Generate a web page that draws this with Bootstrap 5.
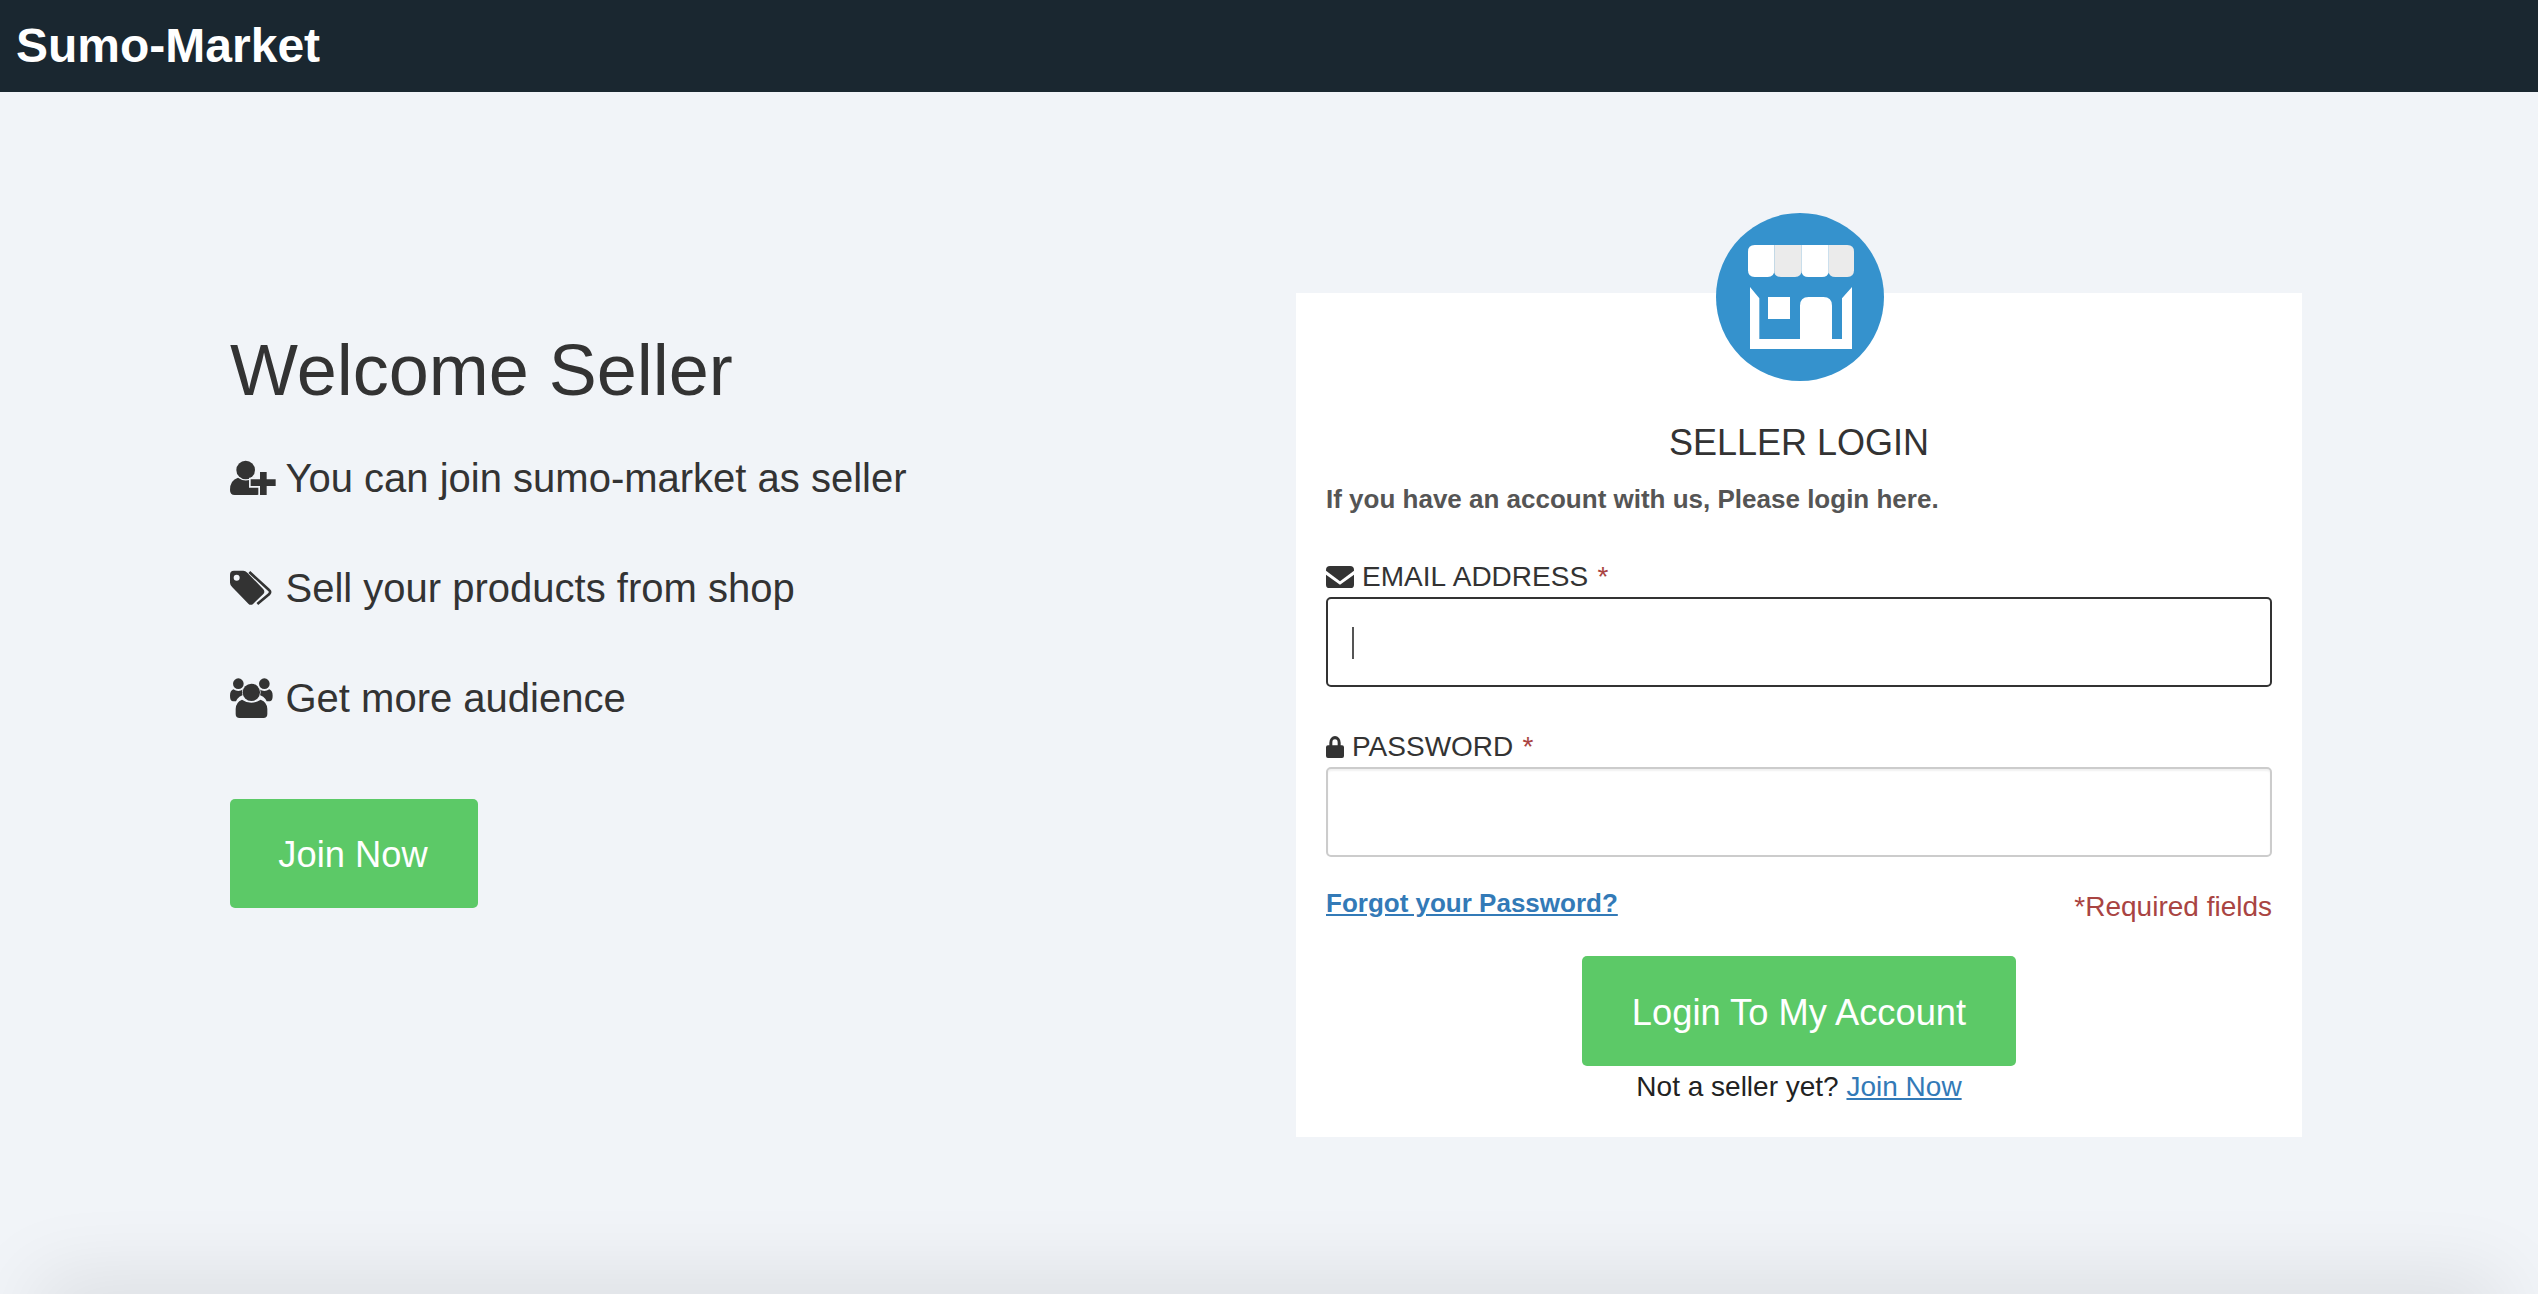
<!DOCTYPE html>
<html lang="en">
<head>
    <meta charset="UTF-8">
    <meta name="viewport" content="width=device-width, initial-scale=1.0">
    <title>Sumo-Market - Seller Login</title>
    <link href="https://cdn.jsdelivr.net/npm/bootstrap@5.3.2/dist/css/bootstrap.min.css" rel="stylesheet">
    <style>
        html, body { height: 100%; }
        body { background: #f1f4f8; color: #333; font-family: "Liberation Sans", Arial, sans-serif; font-size: 28px; line-height: 40px; overflow: hidden; position: relative; }
        a { color: #337ab7; }
        .top-bar { background: #1a2730; height: 92px; padding: 0 0 0 16px; }
        .top-bar .navbar-brand { color: #fff; font-size: 48px; font-weight: 700; line-height: 92px; padding: 0; margin: 0; height: 92px; }
        .intro { padding: 238px 0 0 230px; }
        .intro h1 { font-size: 72px; line-height: 80px; font-weight: 400; margin: 0 0 40px; color: #333; }
        .perk { font-size: 40px; line-height: 56px; margin-bottom: 54px; display: flex; align-items: center; gap: 9.5px; }
        .perk svg { width: 46px; height: 40px; flex: none; }
        .btn-sumo { background: #5cc967; border: 0; color: #fff; border-radius: 5px; font-size: 36.3px; line-height: 40px; }
        .btn-sumo:hover { background: #50bb5b; color: #fff; }
        .btn-join { width: 248px; height: 109px; margin-top: 73px; padding: 2px 2px 0 0; display: flex; align-items: center; justify-content: center; }
        .login-col { padding-top: 201px; padding-left: 27px; }
        .login-box { background: #fff; width: 1006px; height: 844px; padding: 0 30px; display: flow-root; }
        .shop-badge { display: block; width: 168px; height: 168px; margin: -80px 0 0 390px; }
        .login-title { font-size: 36px; line-height: 44px; font-weight: 400; text-align: center; margin: 40px 0 0; color: #333; }
        .login-note { font-size: 26px; font-weight: 700; color: #555; margin: 14px 0 0; line-height: 40px; }
        .field-label { display: flex; align-items: center; gap: 8px; line-height: 32px; margin: 0 0 4px; color: #333; word-spacing: 1.5px; }
        .field-label svg { flex: none; }
        .req { color: #a94442; }
        .email-group { margin-top: 42px; margin-bottom: 44px; }
        .pass-group { margin-bottom: 26px; }
        .field-input { height: 90px; border: 2px solid #ccc; border-radius: 5px; padding: 0 24px; font-size: 28px; box-shadow: inset 0 2px 2px rgba(0,0,0,.06); }
        .field-input.active-input { border-color: #333; box-shadow: none; }
        .fake-caret { position: absolute; left: 26px; top: 30px; width: 2px; height: 32px; background: #555; }
        .forgot { font-size: 26px; font-weight: 700; }
        .req-note { color: #a94442; padding-top: 4px; }
        .login-action { margin-top: 29px; }
        .btn-login { width: 434px; height: 110px; padding: 3px 0 0; display: flex; align-items: center; justify-content: center; }
        .signup-line { text-align: center; line-height: 36px; margin-top: 3px; color: #222; }
        .bottom-shade { position: absolute; left: 50px; right: 50px; bottom: -40px; height: 40px; box-shadow: 0 0 80px 14px rgba(0,0,0,.1); }
    </style>
</head>
<body>
    <nav class="navbar top-bar">
        <a class="navbar-brand" href="#">Sumo-Market</a>
    </nav>

    <div class="row g-0">
        <div class="col-6">
            <div class="intro">
                <h1>Welcome Seller</h1>
                <div class="perk">
                    <svg viewBox="88 84 138 120" fill="#333">
                        <circle cx="135" cy="120" r="28"/>
                        <path d="M88 180 Q88 150 112 143 Q135 160 160 143 Q180 150 182 180 Q182 195 168 195 H102 Q88 195 88 180Z"/>
                        <path d="M178 126 H198 V148 H225 V168 H198 V195 H178 V168 H150 V148 H178Z" stroke="#f1f4f8" stroke-width="10" paint-order="stroke"/>
                    </svg>
                    <span>You can join sumo-market as seller</span>
                </div>
                <div class="perk">
                    <svg viewBox="88 412 138 120" fill="#333">
                        <path fill-rule="evenodd" d="M88 432 Q88 420 100 420 H128 Q134 420 140 426 L188 476 Q194 483 188 490 L158 519 Q150 526 143 519 L95 470 Q88 463 88 456Z M108 432 A9 9 0 1 0 108 450 A9 9 0 1 0 108 432Z"/>
                        <path d="M146 424 L205 478 Q212 484 205 491 L170 520" fill="none" stroke="#333" stroke-width="8"/>
                    </svg>
                    <span>Sell your products from shop</span>
                </div>
                <div class="perk">
                    <svg viewBox="88 742 138 120" fill="#333">
                        <circle cx="113" cy="759" r="16"/>
                        <circle cx="191" cy="759" r="16"/>
                        <path d="M88 795 Q88 780 98 776 Q113 786 128 776 L136 790 Q112 796 106 812 H96 Q88 810 88 795Z"/>
                        <path d="M216 795 Q216 780 206 776 Q191 786 176 776 L168 790 Q192 796 198 812 H208 Q216 810 216 795Z"/>
                        <circle cx="152" cy="785" r="26" stroke="#f1f4f8" stroke-width="4" paint-order="stroke"/>
                        <path d="M105 850 V835 Q105 815 124 807 Q152 826 180 807 Q200 815 200 835 V850 Q200 862 188 862 H117 Q105 862 105 850Z" stroke="#f1f4f8" stroke-width="4" paint-order="stroke"/>
                    </svg>
                    <span>Get more audience</span>
                </div>
                <a href="#" class="btn btn-sumo btn-join">Join Now</a>
            </div>
        </div>
        <div class="col-6">
            <div class="login-col">
                <div class="login-box">
                    <svg class="shop-badge" viewBox="108 72 504 504">
                        <circle cx="360" cy="324" r="252" fill="#3592cd"/>
                        <path d="M224 168 H283 V244 Q283 264 263 264 H224 Q204 264 204 244 V188 Q204 168 224 168Z" fill="#fff"/>
                        <path d="M283 168 H365 V244 Q365 264 345 264 H303 Q285 264 283 250Z" fill="#ebebeb"/>
                        <path d="M365 168 H446 V250 Q444 264 426 264 H385 Q367 264 365 250Z" fill="#fff"/>
                        <path d="M446 168 H502 Q522 168 522 188 V244 Q522 264 502 264 H466 Q448 264 446 250Z" fill="#ebebeb"/>
                        <path d="M210 294 L238 328 V450 H360 V350 Q360 324 386 324 H430 Q456 324 456 350 V450 H486 V328 L516 294 V480 H210Z" fill="#fff"/>
                        <rect x="264" y="324" width="66" height="66" fill="#fff"/>
                    </svg>
                    <h2 class="login-title">SELLER LOGIN</h2>
                    <p class="login-note">If you have an account with us, Please login here.</p>
                    <form>
                        <div class="email-group">
                            <label class="field-label">
                                <svg width="28" height="22" viewBox="78 54 84 66" fill="#333"><path d="M78 66 Q78 54 90 54 H150 Q162 54 162 66 V68 L120 100 L78 68Z"/><path d="M78 80 L120 110 L162 80 V110 Q162 120 152 120 H88 Q78 120 78 110Z"/></svg>
                                <span>EMAIL ADDRESS <span class="req">*</span></span>
                            </label>
                            <div class="position-relative">
                                <input type="text" class="form-control field-input active-input">
                                <span class="fake-caret"></span>
                            </div>
                        </div>
                        <div class="pass-group">
                            <label class="field-label">
                                <svg width="18" height="22" viewBox="78 558 54 66" fill="#333"><path fill-rule="evenodd" d="M88 586 V578 A17 20 0 0 1 122 578 V586 H126 Q132 586 132 592 V618 Q132 624 126 624 H84 Q78 624 78 618 V592 Q78 586 84 586Z M97 586 H113 V578 A8 10 0 0 0 97 578Z"/></svg>
                                <span>PASSWORD <span class="req">*</span></span>
                            </label>
                            <input type="password" class="form-control field-input">
                        </div>
                        <div class="d-flex justify-content-between align-items-start">
                            <a href="#" class="forgot">Forgot your Password?</a>
                            <span class="req-note">*Required fields</span>
                        </div>
                        <div class="d-flex justify-content-center login-action">
                            <button type="button" class="btn btn-sumo btn-login">Login To My Account</button>
                        </div>
                        <p class="signup-line mb-0">Not a seller yet? <a href="#">Join Now</a></p>
                    </form>
                </div>
            </div>
        </div>
    </div>
    <div class="bottom-shade"></div>

    <script src="https://cdn.jsdelivr.net/npm/bootstrap@5.3.2/dist/js/bootstrap.bundle.min.js"></script>
</body>
</html>
